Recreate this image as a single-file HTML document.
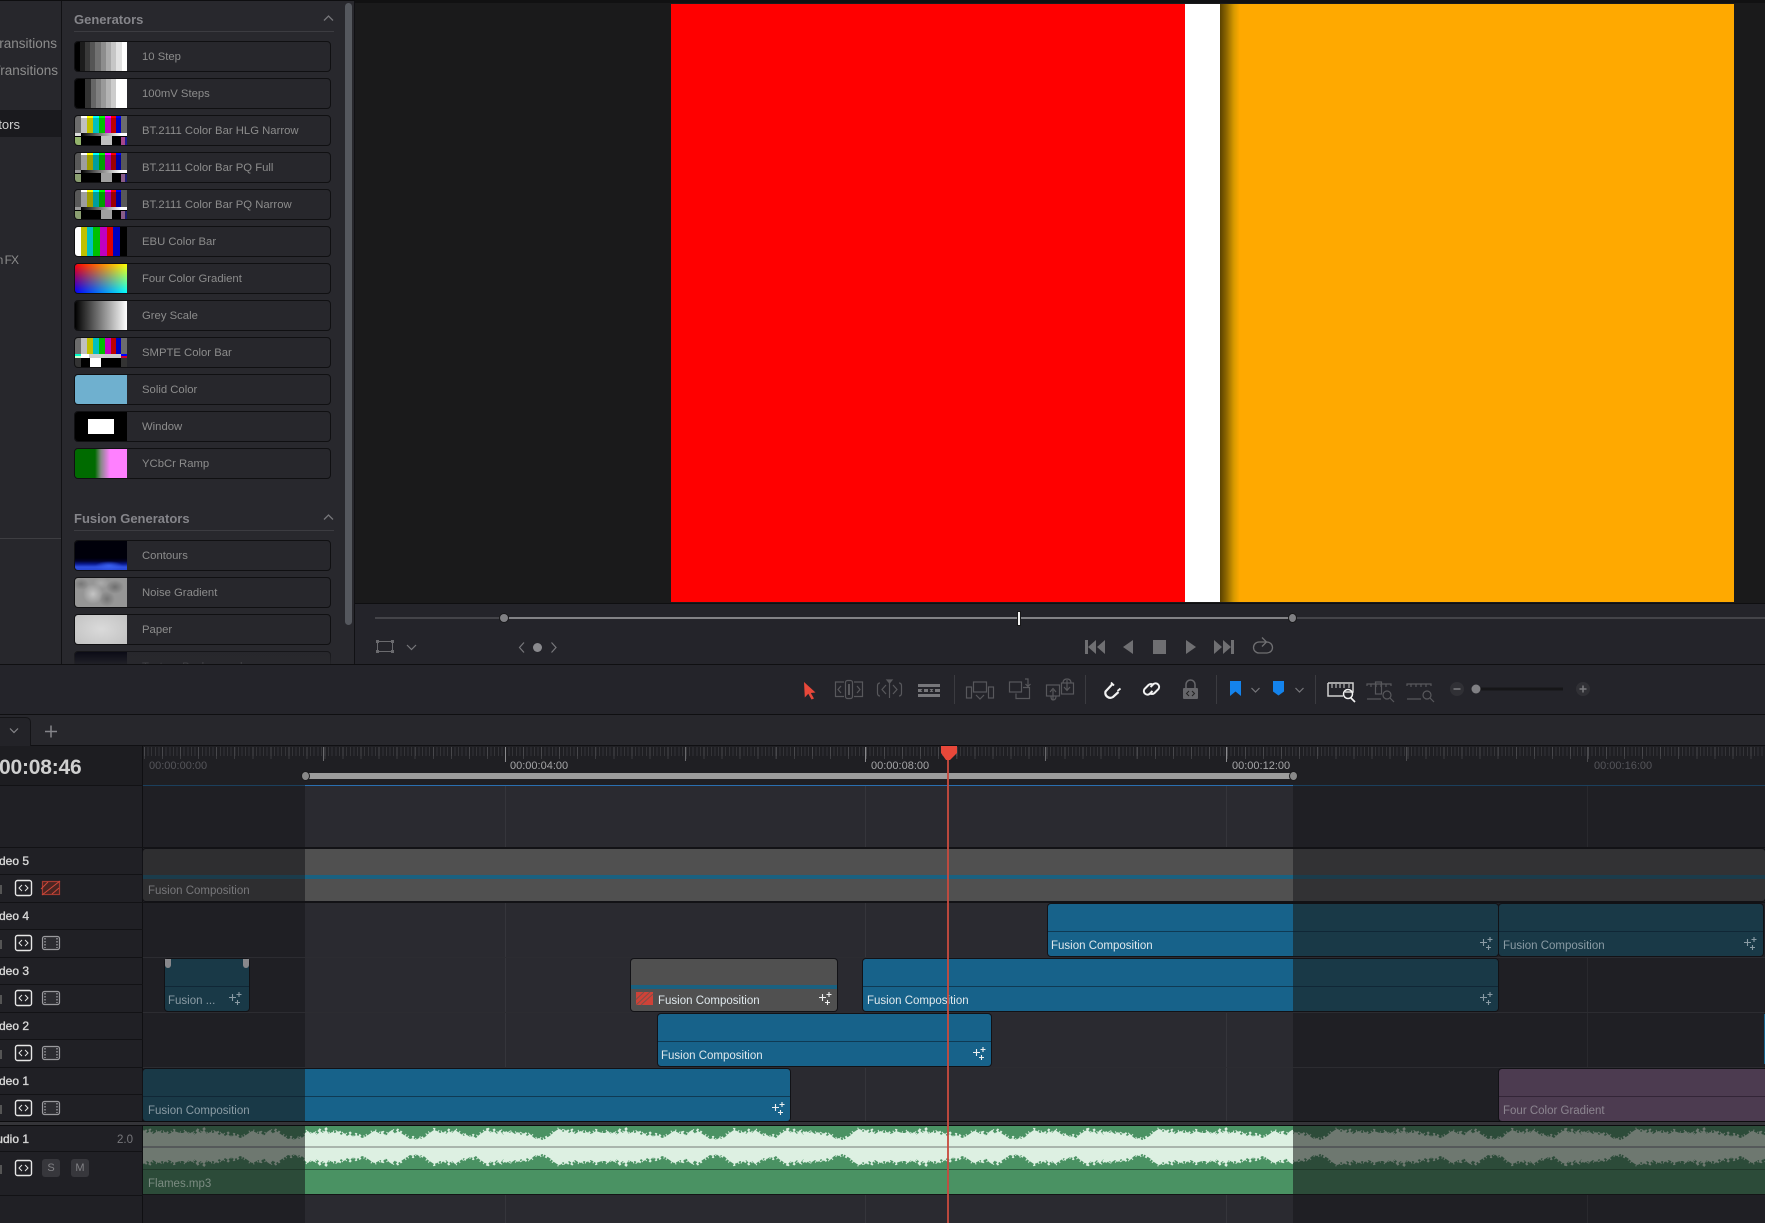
<!DOCTYPE html>
<html><head><meta charset="utf-8"><title>Edit</title>
<style>
*{box-sizing:border-box}
html,body{margin:0;padding:0;width:1765px;height:1223px;overflow:hidden;background:#25252a}
body{position:relative;font-family:"Liberation Sans",sans-serif}
.a,.t,.i,.c,.l{position:absolute}
.t{white-space:nowrap;line-height:14px;height:14px}
.i{left:74px;width:257px;height:31px;background:#27272c;border:1px solid #101012;border-radius:4px;overflow:hidden}
.i b{position:absolute;left:0;top:0;width:52px;height:29px;overflow:hidden;display:block}
.i span{position:absolute;left:67px;top:8px;font-size:11.3px;line-height:14px;color:#8c8c8c;white-space:nowrap}
.i b i{position:absolute;display:block}
.h{font-size:13px;font-weight:bold;color:#85858a}
.s{font-size:13.5px;color:#8c8c8c}
.c{border-radius:3px;box-shadow:0 0 0 1px #121216;overflow:hidden}
.c u{position:absolute;left:0;right:0;top:27px;height:1px;background:rgba(10,25,40,.55)}
.c em{position:absolute;top:35px;font-style:normal;font-size:11.5px;line-height:14px;white-space:nowrap;color:#dfe8ec}
.n{font-size:12px;-webkit-text-stroke:.35px #d8d8d8;color:#d8d8d8;text-align:right;width:80px;left:-51px}
.l{background:#121215}
.sb{background:linear-gradient(90deg,#6c6c6c 0 6px,#c0c0c0 6px 12px,#c0c000 12px 18px,#00c0c0 18px 24px,#00c000 24px 30px,#c000c0 30px 36px,#c00000 36px 41px,#0000c0 41px 46px,#6c6c6c 46px)}
</style></head><body>

<!-- far left panel -->
<div class="a" style="left:0;top:1px;width:61px;height:663px;background:#27272c"></div>
<div class="a" style="left:0;top:110px;width:61px;height:27px;background:#1a1a1e"></div>
<div class="a" style="left:0;top:538px;width:61px;height:1px;background:#3e3e42"></div>
<div class="t s" style="right:1708px;top:37px">Video Transitions</div>
<div class="t s" style="right:1707px;top:64px">Audio Transitions</div>
<div class="t" style="right:1745px;top:118px;font-size:13px;color:#cfcfcf">Generators</div>
<div class="t s" style="right:1747px;top:253px;font-size:12px;letter-spacing:-1px">Open FX</div>
<div class="a" style="left:61px;top:0;width:1px;height:664px;background:#111114"></div>

<!-- generators panel -->
<div class="a" style="left:62px;top:1px;width:292px;height:663px;background:#28282d;overflow:hidden">
</div>
<div class="a" id="gen" style="left:0;top:0;width:354px;height:664px;overflow:hidden">
<div class="t h" style="left:74px;top:13px">Generators</div>
<div class="a" style="left:74px;top:31px;width:260px;height:1px;background:#3c3c41"></div>
<svg class="a" style="left:323px;top:14px" width="11" height="8"><path d="M1 6.5L5.5 2L10 6.5" fill="none" stroke="#77777b" stroke-width="1.3"/></svg>

<div class="i" style="top:41px"><b style="background:linear-gradient(90deg,#000 0 5px,#1c1c1c 5px 10px,#393939 10px 15px,#555 15px 20px,#717171 20px 26px,#8d8d8d 26px 31px,#aaa 31px 36px,#c6c6c6 36px 41px,#e2e2e2 41px 47px,#fff 47px)"></b><span>10 Step</span></div>
<div class="i" style="top:78px"><b style="background:linear-gradient(90deg,#000 0 10px,#333 10px 16px,#666 16px 21px,#808080 21px 26px,#999 26px 31px,#b3b3b3 31px 36px,#ccc 36px 41px,#fff 41px)"></b><span>100mV Steps</span></div>
<div class="i" style="top:115px"><b style="background:#000"><i class="sb" style="left:0;top:0;width:52px;height:17px"></i><i style="left:6px;top:0;width:40px;height:2px;background:linear-gradient(90deg,#fff 0 6px,#ff0 6px 12px,#0ff 12px 18px,#0f0 18px 24px,#f0f 24px 30px,#f00 30px 35px,#00f 35px)"></i><i style="left:0;top:17px;width:6px;height:3px;background:#ddd"></i><i style="left:6px;top:17px;width:40px;height:3px;background:linear-gradient(90deg,#000,#fff)"></i><i style="left:46px;top:17px;width:6px;height:3px;background:#fff"></i><i style="left:0;top:21px;width:6px;height:8px;background:#93b36b"></i><i style="left:26px;top:20px;width:11px;height:9px;background:#c0c0c0"></i><i style="left:46px;top:21px;width:4px;height:8px;background:#a5468c"></i><i style="left:50px;top:21px;width:2px;height:8px;background:#1c1c90"></i></b><span>BT.2111 Color Bar HLG Narrow</span></div>
<div class="i" style="top:152px"><b style="background:#000"><i class="sb" style="left:0;top:0;width:52px;height:17px;opacity:.82"></i><i style="left:6px;top:0;width:40px;height:2px;background:linear-gradient(90deg,#fff 0 6px,#ff0 6px 12px,#0ff 12px 18px,#0f0 18px 24px,#f0f 24px 30px,#f00 30px 35px,#00f 35px)"></i><i style="left:0;top:17px;width:6px;height:3px;background:#999"></i><i style="left:6px;top:17px;width:40px;height:3px;background:linear-gradient(90deg,#000,#fff)"></i><i style="left:46px;top:17px;width:6px;height:3px;background:#fff"></i><i style="left:0;top:21px;width:6px;height:8px;background:#8a9e70"></i><i style="left:26px;top:20px;width:11px;height:9px;background:#a0a0a0"></i><i style="left:46px;top:21px;width:4px;height:8px;background:#8a5c88"></i><i style="left:50px;top:21px;width:2px;height:8px;background:#1c1c70"></i></b><span>BT.2111 Color Bar PQ Full</span></div>
<div class="i" style="top:189px"><b style="background:#000"><i class="sb" style="left:0;top:0;width:52px;height:17px;opacity:.82"></i><i style="left:6px;top:0;width:40px;height:2px;background:linear-gradient(90deg,#fff 0 6px,#ff0 6px 12px,#0ff 12px 18px,#0f0 18px 24px,#f0f 24px 30px,#f00 30px 35px,#00f 35px)"></i><i style="left:0;top:17px;width:6px;height:3px;background:#999"></i><i style="left:6px;top:17px;width:40px;height:3px;background:linear-gradient(90deg,#000,#fff)"></i><i style="left:46px;top:17px;width:6px;height:3px;background:#fff"></i><i style="left:0;top:21px;width:6px;height:8px;background:#8a9e70"></i><i style="left:26px;top:20px;width:11px;height:9px;background:#a0a0a0"></i><i style="left:46px;top:21px;width:4px;height:8px;background:#8a5c88"></i><i style="left:50px;top:21px;width:2px;height:8px;background:#1c1c70"></i></b><span>BT.2111 Color Bar PQ Narrow</span></div>
<div class="i" style="top:226px"><b style="background:linear-gradient(90deg,#fff 0 6px,#c0c000 6px 12px,#00c0c0 12px 18px,#00c000 18px 25px,#c000c0 25px 32px,#e00000 32px 38px,#0000c0 38px 45px,#000 45px)"></b><span>EBU Color Bar</span></div>
<div class="i" style="top:263px"><b style="background:linear-gradient(90deg,#00f,#0ff)"><i style="left:0;top:0;width:52px;height:29px;background:linear-gradient(90deg,#f00,#ff0);-webkit-mask-image:linear-gradient(180deg,#000,transparent);mask-image:linear-gradient(180deg,#000,transparent)"></i></b><span>Four Color Gradient</span></div>
<div class="i" style="top:300px"><b style="background:linear-gradient(90deg,#000,#fff)"></b><span>Grey Scale</span></div>
<div class="i" style="top:337px"><b style="background:#000"><i class="sb" style="left:0;top:0;width:52px;height:16px"></i><i style="left:0;top:16px;width:6px;height:4px;background:linear-gradient(180deg,#0fc 0 2px,#cfc 2px)"></i><i style="left:6px;top:16px;width:40px;height:4px;background:linear-gradient(90deg,#fff 0 8px,#ccc 8px)"></i><i style="left:46px;top:16px;width:6px;height:4px;background:linear-gradient(180deg,#00f 0 2px,#c03 2px)"></i><i style="left:0;top:20px;width:6px;height:9px;background:#333"></i><i style="left:15px;top:20px;width:11px;height:9px;background:#fff"></i><i style="left:46px;top:20px;width:6px;height:9px;background:#333"></i></b><span>SMPTE Color Bar</span></div>
<div class="i" style="top:374px"><b style="background:#6fb0cf"></b><span>Solid Color</span></div>
<div class="i" style="top:411px"><b style="background:#000"><i style="left:13px;top:7px;width:26px;height:15px;background:#fff"></i></b><span>Window</span></div>
<div class="i" style="top:448px"><b style="background:linear-gradient(90deg,#006b00 0 20px,#888 26px,#ff80ff 35px)"></b><span>YCbCr Ramp</span></div>

<div class="t h" style="left:74px;top:512px">Fusion Generators</div>
<div class="a" style="left:74px;top:530px;width:260px;height:1px;background:#3c3c41"></div>
<svg class="a" style="left:323px;top:513px" width="11" height="8"><path d="M1 6.5L5.5 2L10 6.5" fill="none" stroke="#77777b" stroke-width="1.3"/></svg>

<div class="i" style="top:540px"><b style="background:radial-gradient(ellipse 14px 5px at 34px 25px,#3a60f0,transparent),linear-gradient(180deg,#00000a 0 17px,#02022a 20px,#0a1a90 23px,#2f50e0 26px,#2a48d8 29px)"></b><span>Contours</span></div>
<div class="i" style="top:577px"><b style="background:radial-gradient(ellipse 10px 10px at 18px 16px,#c4c4c4,transparent),radial-gradient(ellipse 9px 7px at 40px 9px,#707070,transparent),radial-gradient(ellipse 8px 8px at 32px 21px,#767676,transparent),radial-gradient(ellipse 8px 6px at 6px 6px,#787878,transparent),radial-gradient(ellipse 8px 6px at 26px 5px,#aaa,transparent),#969696"></b><span>Noise Gradient</span></div>
<div class="i" style="top:614px"><b style="background:radial-gradient(ellipse 32px 20px at 26px 14px,#dadada,#c4c4c4)"></b><span>Paper</span></div>
<div class="i" style="top:651px"><b style="background:#01010e"></b><span>Texture Background</span></div>
<div class="a" style="left:62px;top:646px;width:282px;height:18px;background:linear-gradient(180deg,rgba(40,40,45,0),rgba(40,40,45,.8))"></div>
</div>
<div class="a" style="left:345px;top:3px;width:7px;height:622px;border-radius:4px;background:#55585e"></div>
<div class="a" style="left:354px;top:0;width:1px;height:664px;background:#111114"></div>

<!-- viewer -->
<div class="a" style="left:355px;top:0;width:1410px;height:604px;background:#1a1a1b"></div>
<div class="a" style="left:0;top:0;width:1765px;height:1px;background:#0e0e10"></div>
<div class="a" style="left:355px;top:0;width:1410px;height:3px;background:#111112"></div>
<div class="a" style="left:671px;top:4px;width:514px;height:598px;background:#f00"></div>
<div class="a" style="left:1185px;top:4px;width:35px;height:598px;background:#fff"></div>
<div class="a" style="left:1220px;top:4px;width:514px;height:598px;background:linear-gradient(90deg,#5a4200 0,#8a6400 6px,#d89a00 14px,#ffa900 20px)"></div>
<div class="a" style="left:355px;top:603px;width:1410px;height:1px;background:#0f0f11"></div>

<!-- jog -->
<div class="a" style="left:355px;top:604px;width:1410px;height:60px;background:#24242a"></div>
<div class="a" style="left:375px;top:617px;width:1390px;height:2px;background:#444449"></div>
<div class="a" style="left:504px;top:617px;width:788px;height:2px;background:#828286"></div>
<div class="a" style="left:500px;top:614px;width:8px;height:8px;border-radius:50%;background:#808084;box-shadow:0 0 0 1px #18181a"></div>
<div class="a" style="left:1288.5px;top:614px;width:7px;height:8px;border-radius:50%;background:#808084;box-shadow:0 0 0 1px #18181a"></div>
<div class="a" style="left:1018px;top:612px;width:2px;height:13px;background:#f0f0f0;box-shadow:0 0 0 1px #18181a"></div>

<!-- toolbar, tabs -->
<div class="a" style="left:0;top:664px;width:1765px;height:51px;background:#24242a;border-top:1px solid #0f0f11;border-bottom:1px solid #0f0f11"></div>
<div class="a" style="left:0;top:715px;width:1765px;height:31px;background:#27272c;border-bottom:1px solid #101013"></div>
<div class="a" style="left:-4px;top:717px;width:35px;height:29px;background:#232328;border:1px solid #141417;border-radius:0 5px 0 0;border-bottom:0"></div>

<!-- timeline columns -->
<div class="a" style="left:143px;top:746px;width:1622px;height:477px;background:linear-gradient(90deg,#1f1f24 0 162px,#2a2a30 162px 1150px,#1f1f24 1150px)"></div>
<div class="a" style="left:143px;top:746px;width:1622px;height:39px;background:#1f1f23"></div>
<div class="a" style="left:144px;top:747px;width:1621px;height:9px;opacity:.38;background:repeating-linear-gradient(90deg,#55555a 0 1px,transparent 1px 3.61px)"></div>
<div class="a" style="left:144px;top:747px;width:1621px;height:12px;opacity:.38;background:repeating-linear-gradient(90deg,#6a6a6e 0 1px,transparent 1px 18.05px)"></div>
<div class="a" style="left:323px;top:747px;width:1px;height:14px;background:#6a6a6d"></div>
<div class="a" style="left:505px;top:747px;width:1px;height:15px;background:#8a8a8d"></div>
<div class="a" style="left:685px;top:747px;width:1px;height:14px;background:#6a6a6d"></div>
<div class="a" style="left:865px;top:747px;width:1px;height:15px;background:#8a8a8d"></div>
<div class="a" style="left:1045px;top:747px;width:1px;height:14px;background:#6a6a6d"></div>
<div class="a" style="left:1226px;top:747px;width:1px;height:15px;background:#8a8a8d"></div>
<div class="a" style="left:1406px;top:747px;width:1px;height:14px;background:#4a4a4d"></div>
<div class="a" style="left:1587px;top:747px;width:1px;height:15px;background:#4a4a4d"></div>
<div class="t" style="left:149px;top:759px;font-size:11px;color:#55555a">00:00:00:00</div>
<div class="t" style="left:510px;top:759px;font-size:11px;color:#a6a6a8">00:00:04:00</div>
<div class="t" style="left:871px;top:759px;font-size:11px;color:#a6a6a8">00:00:08:00</div>
<div class="t" style="left:1232px;top:759px;font-size:11px;color:#a6a6a8">00:00:12:00</div>
<div class="t" style="left:1594px;top:759px;font-size:11px;color:#55555a">00:00:16:00</div>
<div class="a" style="left:305px;top:773px;width:988px;height:6px;background:#9c9c9c"></div>
<div class="a" style="left:302px;top:772px;width:7px;height:8px;border-radius:50%;background:#888;box-shadow:0 0 0 1px #1a1a1c"></div>
<div class="a" style="left:1290px;top:772px;width:7px;height:8px;border-radius:50%;background:#888;box-shadow:0 0 0 1px #1a1a1c"></div>
<div class="a" style="left:143px;top:785px;width:1622px;height:1px;background:#1b3f5c"></div>
<div class="a" style="left:305px;top:785px;width:988px;height:1px;background:#2a6fb0"></div>

<!-- grid lines -->
<div class="a" style="left:505px;top:786px;width:1px;height:437px;background:#35353b"></div>
<div class="a" style="left:865px;top:786px;width:1px;height:437px;background:#35353b"></div>
<div class="a" style="left:1226px;top:786px;width:1px;height:437px;background:#35353b"></div>
<div class="a" style="left:1587px;top:786px;width:1px;height:437px;background:#29292e"></div>
<div class="a" style="left:143px;top:847px;width:1622px;height:1px;background:#121215"></div>
<div class="a" style="left:143px;top:902px;width:1622px;height:1px;background:#121215"></div>
<div class="a" style="left:143px;top:957px;width:1622px;height:1px;background:#2c2c31"></div>
<div class="a" style="left:143px;top:1012px;width:1622px;height:1px;background:#2c2c31"></div>
<div class="a" style="left:143px;top:1067px;width:1622px;height:1px;background:#2c2c31"></div>

<!-- header col -->
<div class="a" style="left:0;top:746px;width:143px;height:477px;background:#202025"></div>
<div class="a" style="left:0;top:746px;width:143px;height:39px;background:#1d1d21"></div>
<div class="a" style="left:142px;top:746px;width:1px;height:477px;background:#0f0f12"></div>
<div class="t" style="left:-1px;top:756px;height:23px;line-height:23px;font-size:21px;font-weight:bold;color:#cfcfcf;letter-spacing:-.2px">00:08:46</div>
<div class="l" style="left:0;top:785px;width:143px;height:1px"></div>
<div class="l" style="left:0;top:847px;width:143px;height:1px"></div>
<div class="l" style="left:0;top:874px;width:143px;height:1px"></div>
<div class="l" style="left:0;top:902px;width:143px;height:1px"></div>
<div class="l" style="left:0;top:929px;width:143px;height:1px"></div>
<div class="l" style="left:0;top:957px;width:143px;height:1px"></div>
<div class="l" style="left:0;top:984px;width:143px;height:1px"></div>
<div class="l" style="left:0;top:1012px;width:143px;height:1px"></div>
<div class="l" style="left:0;top:1039px;width:143px;height:1px"></div>
<div class="l" style="left:0;top:1067px;width:143px;height:1px"></div>
<div class="l" style="left:0;top:1094px;width:143px;height:1px"></div>
<div class="l" style="left:0;top:1151px;width:143px;height:1px"></div>
<div class="l" style="left:0;top:1195px;width:143px;height:1px"></div>
<div class="t n" style="top:854px">Video 5</div>
<div class="t n" style="top:909px">Video 4</div>
<div class="t n" style="top:964px">Video 3</div>
<div class="t n" style="top:1019px">Video 2</div>
<div class="t n" style="top:1074px">Video 1</div>
<div class="t n" style="top:1132px">Audio 1</div>
<div class="t" style="right:1632px;top:1133px;font-size:11.5px;color:#77777b">2.0</div>
<div class="a" style="left:42px;top:1159px;width:18px;height:18px;background:#37373c;border-radius:3px"></div>
<div class="a" style="left:71px;top:1159px;width:18px;height:18px;background:#37373c;border-radius:3px"></div>
<div class="t" style="left:42px;top:1161px;width:18px;text-align:center;font-size:11px;color:#818185">S</div>
<div class="t" style="left:71px;top:1161px;width:18px;text-align:center;font-size:11px;color:#818185">M</div>

<!-- Clips -->
<div class="c" style="left:143px;top:849px;width:1622px;height:52px;background:linear-gradient(90deg,#2e2e30 0 162px,#505050 162px 1150px,#323234 1150px)"><div class="a" style="left:0;right:0;top:26px;height:4px;background:linear-gradient(90deg,#1b3c4b 0 162px,#1a6180 162px 1150px,#1b3c4b 1150px)"></div><em style="left:5px;color:#77777a">Fusion Composition</em></div>

<div class="c" style="left:1048px;top:904px;width:450px;height:52px;background:linear-gradient(90deg,#17628a 0 245px,#193947 245px)"><u></u><em style="left:3px">Fusion Composition</em></div>
<div class="c" style="left:1499px;top:904px;width:264px;height:52px;background:#193947"><u></u><em style="left:4px;color:#8a9ba4">Fusion Composition</em></div>

<div class="c" style="left:165px;top:959px;width:84px;height:52px;background:#193947"><u></u><em style="left:3px;color:#8a9ba4">Fusion ...</em></div>
<div class="a" style="left:165px;top:959px;width:6px;height:9px;border-radius:0 0 3px 3px;background:#88888c"></div>
<div class="a" style="left:243px;top:959px;width:6px;height:9px;border-radius:0 0 3px 3px;background:#88888c"></div>
<div class="c" style="left:631px;top:959px;width:206px;height:52px;background:#505050"><div class="a" style="left:0;right:0;top:26px;height:4px;background:#1a6180"></div><em style="left:27px">Fusion Composition</em></div>
<div class="c" style="left:863px;top:959px;width:635px;height:52px;background:linear-gradient(90deg,#17628a 0 430px,#193947 430px)"><u></u><em style="left:4px">Fusion Composition</em></div>

<div class="c" style="left:658px;top:1014px;width:333px;height:52px;background:#17628a"><u></u><em style="left:3px">Fusion Composition</em></div>
<div class="a" style="left:1764px;top:1014px;width:1px;height:50px;background:#17628a"></div>

<div class="c" style="left:143px;top:1069px;width:647px;height:52px;background:linear-gradient(90deg,#193947 0 162px,#17628a 162px)"><u></u><em style="left:5px;color:#8a9ba4">Fusion Composition</em></div>
<div class="c" style="left:1499px;top:1069px;width:270px;height:52px;background:#4c3b50"><u style="background:rgba(25,15,30,.5)"></u><em style="left:4px;color:#8c8590">Four Color Gradient</em></div>

<!-- audio -->
<div class="a" style="left:143px;top:1121px;width:1622px;height:5px;background:#343438;border-top:1px solid #0c0c0e;border-bottom:1px solid #0c0c0e"></div>
<div class="a" style="left:0;top:1121px;width:143px;height:5px;background:#343438;border-top:1px solid #0c0c0e;border-bottom:1px solid #0c0c0e"></div>
<div class="a" style="left:143px;top:1126px;width:1622px;height:69px;background:linear-gradient(90deg,#2c4b39 0 162px,#4a9263 162px 1150px,#2c4b39 1150px);border-bottom:1px solid #141416"></div>
<svg class="a" style="left:143px;top:1126px" width="1622" height="44">
<defs>
<path id="w" d="M0 21V7L3 5L6 8L9 6L12 9L15 5L18 7L21 4L24 8L27 6L30 7L33 5L36 9L39 7L42 10L45 8L48 11L51 9L54 10L57 12L60 11L63 9L66 7L69 5L72 6L75 8L78 7L81 10L84 6L87 4L90 8L93 5L96 7L99 9L102 11L105 13L108 12L111 14L114 12L117 13L120 11L123 8L126 6L129 4L132 5L135 7L138 6L141 8L144 5L147 7L150 4L153 6L156 8L159 10L162 9L165 11L168 10L171 12L174 9L177 7L180 5L183 4L186 7L189 5L192 8L195 4L198 9L201 5L204 7L207 6L210 8L213 6L216 9L219 7L222 10L225 8L228 11L231 13L234 12L237 14L240 13L243 11L246 9L249 6L252 4L255 3L258 6L261 4L264 7L267 5L270 8L273 6L276 5L279 7L282 6L285 8L288 7L291 5L294 6L297 7L300 7V21Z"/>
<pattern id="p1" width="300" height="44" patternUnits="userSpaceOnUse" x="162"><g fill="#ddf0e2" stroke="#ddf0e2" stroke-width="4" stroke-dasharray="1 3 1 2 2 4 1 2 1 5 1 3"><use href="#w"/><use href="#w" transform="matrix(1 0 0 -1 0 42)"/></g></pattern>
<pattern id="p2" width="300" height="44" patternUnits="userSpaceOnUse" x="40"><g fill="#6e7870" stroke="#6e7870" stroke-width="4" stroke-dasharray="1 3 1 2 2 4 1 2 1 5 1 3"><use href="#w"/><use href="#w" transform="matrix(1 0 0 -1 0 42)"/></g></pattern>
</defs>
<rect x="0" width="162" height="43" fill="url(#p2)"/>
<rect x="162" width="988" height="43" fill="url(#p1)"/>
<rect x="1150" width="472" height="43" fill="url(#p2)"/>
<rect x="0" y="20" width="162" height="2" fill="#55595a"/>
<rect x="162" y="20" width="988" height="2" fill="#a9b5ac"/>
<rect x="1150" y="20" width="472" height="2" fill="#55595a"/>
<rect x="0" y="43" width="162" height="1" fill="#20382a"/>
<rect x="162" y="43" width="988" height="1" fill="#2c5a3e"/>
<rect x="1150" y="43" width="472" height="1" fill="#20382a"/>
</svg>
<div class="t" style="left:148px;top:1177px;font-size:11.5px;color:#7c8c82">Flames.mp3</div>

<!-- playhead -->
<div class="a" style="left:947px;top:760px;width:2px;height:463px;background:#c74b3f;opacity:.92"></div>

<!-- All icons -->
<svg class="a" style="left:0;top:0" width="1765" height="1223" fill="none">
<defs>
<g id="sp" fill="none" stroke="currentColor" stroke-width="1.100"><path d="M0 5.500H7M3.500 2V9M7.500 2.500H12.500M10 0V5M6 10.500H11M8.500 8V13"/></g>
<g id="ctl"><rect x="15.500" y="-7.500" width="16" height="15" rx="2" stroke="#e6e6e6" stroke-width="1.400"/><path d="M22 -3L19 0L22 3M25 -3L28 0L25 3" stroke="#e6e6e6" stroke-width="1"/><path d="M0 -3H2V6H0Z" fill="#555"/></g>
<g id="film"><rect x="42.500" y="-6.500" width="17" height="13" rx="2" stroke="#9a9a9e" stroke-width="1.200" fill="#2c2c31"/><path d="M45 -5V5M57 -5V5" stroke="#9a9a9e" stroke-width="1.400" stroke-dasharray="1.500 1.500"/></g>
<g id="red"><rect x="0.500" y="-6.500" width="17" height="13" fill="#4a2522" stroke="#a53a30" stroke-width="1.200"/><path d="M0 7L18 -7M-1 1L6 -6M10 6L17 0" stroke="#d0483a" stroke-width="1"/></g>
<g id="red2"><rect x="0" y="-6.500" width="17" height="13" fill="#cf4238"/><path d="M0 6.500L14 -6.500M5 6.500L17 -4.500M0 1L8 -6.500" stroke="#7c5048" stroke-width="1"/></g>
</defs>

<!-- frame & keyframes -->
<rect x="377.500" y="641.500" width="15" height="10" stroke="#6a6a6e"/>
<path d="M376 640h3v3h-3zM391 640h3v3h-3zM376 650h3v3h-3zM391 650h3v3h-3z" fill="#6a6a6e"/>
<path d="M407 645L411.500 649.500L416 645" stroke="#77777b" stroke-width="1.200"/>
<path d="M524 642.500L519.500 647.500L524 652.500M551.500 642.500L556 647.500L551.500 652.500" stroke="#77777b" stroke-width="1.200"/>
<circle cx="537.500" cy="647.500" r="4.500" fill="#8a8a8e"/>

<!-- transport -->
<g fill="#6f6f72">
<path d="M1085 640h3v14h-3zM1096 640v14l-8-7zM1105 640v14l-8-7z"/>
<path d="M1133 640v14l-10-7z"/>
<rect x="1153" y="640" width="13" height="14"/>
<path d="M1186 640v14l10-7z"/>
<path d="M1214 640v14l8-7zM1223 640v14l8-7zM1231 640h3v14h-3z"/>
</g>
<path d="M1259 642H1267A5.500 5.500 0 0 1 1267 653H1259A5.500 5.500 0 0 1 1259 642" stroke="#6f6f72" stroke-width="1.300"/>
<path d="M1262 637.500L1266.500 642L1262 646.500" stroke="#6f6f72" stroke-width="1.300"/>

<!-- separators -->
<path d="M954.500 675V704M1085.500 675V704M1216.500 675V704M1315.500 675V704" stroke="#3b3b40"/>

<!-- pointer -->
<path d="M804 682L815.500 692.500L810.800 693L814 698.500L811.500 699.500L808.300 693.800L804.800 697.500Z" fill="#e8483a"/>

<g stroke="#58585c" stroke-width="1.200">
<!-- trim -->
<path d="M844 682H835.500V696.500H844M854 682H862.500V696.500H854"/>
<rect x="845.500" y="680.500" width="7" height="18" rx="2"/>
<path d="M849 684V695" stroke-width="2"/>
<path d="M841 686L838 689.500L841 693M857 686L860 689.500L857 693"/>
<!-- dynamic trim -->
<path d="M880 683Q877.500 683 877.500 686V693Q877.500 696 880 696M899 683Q901.500 683 901.500 686V693Q901.500 696 899 696"/>
<path d="M889.500 681V698" />
<path d="M887 680H892L889.500 683Z" fill="#58585c"/>
<path d="M886 685L882 689.500L886 694M893 685L897 689.500L893 694"/>
<!-- insert -->
<rect x="973.500" y="682" width="13" height="10" />
<rect x="966.500" y="687" width="5" height="11" />
<rect x="988.500" y="687" width="5" height="11" />
<path d="M976 695L980 699L984 695"/>
<!-- overwrite -->
<rect x="1009.500" y="682" width="12" height="10"/>
<path d="M1023 687.500H1029.500V698.500H1016V693.500" fill="none"/>
<path d="M1025 679H1028V686M1025.500 684L1028 686.500L1030.500 684"/>
<!-- replace -->
<rect x="1046.500" y="685" width="13" height="11"/>
<rect x="1061.500" y="683" width="12" height="11"/>
<path d="M1053 700V690M1050 692L1053 688.500L1056 692M1067 680V690M1064 687L1067 690.500L1070 687"/>
<path d="M1051 696Q1051 700 1053 700Q1056 700 1056 696M1063 683Q1063 679 1067 679Q1071 679 1071 683"/>
<!-- zoom -->
<path d="M1367 686V684H1391V686M1371 684V687M1376 684V687M1381 684V687M1386 684V687M1367 699H1381"/>
<rect x="1375.500" y="682" width="6" height="12"/>
<circle cx="1387" cy="695" r="4"/>
<path d="M1390 698L1394 702"/>
<path d="M1407 686V684H1431V686M1411 684V687M1416 684V687M1421 684V687M1426 684V687M1407 699H1421"/>
<circle cx="1427" cy="695" r="4"/>
<path d="M1430 698L1434 702"/>
</g>
<!-- blade -->
<path d="M918 684H940V687H918ZM918 694H940V697H918Z" fill="#77777b"/>
<path d="M918 689H940V692H918Z" fill="#77777b"/>
<path d="M924 687.500L921 690.500L924 693.500ZM928 687.500L931 690.500L928 693.500M935 687.500L932 690.500L935 693.500" fill="#25252a"/>

<!-- magnet -->
<path d="M1112.500 684L1105.500 691.500A5 5 0 0 0 1113 697L1118.500 692" stroke="#f2f2f2" stroke-width="2.200"/>
<path d="M1111 682.500L1114 685.500M1117.500 691L1120.500 688.500" stroke="#f2f2f2" stroke-width="1.800"/>
<!-- link -->
<path d="M1150.500 687L1153.500 684A3.600 3.600 0 0 1 1158.500 689L1154.500 693A3.600 3.600 0 0 1 1149.500 693" stroke="#f2f2f2" stroke-width="2"/>
<path d="M1152.500 691L1149.500 694A3.600 3.600 0 0 1 1144.500 689L1148.500 685A3.600 3.600 0 0 1 1153.500 685" stroke="#f2f2f2" stroke-width="2"/>
<!-- lock -->
<rect x="1183" y="688" width="15" height="11" rx="1" fill="#66666a"/>
<path d="M1186 688V684.500A4.500 4.500 0 0 1 1195 684.500V688" stroke="#66666a" stroke-width="1.500"/>
<path d="M1189 691L1186.500 693.500L1189 696M1192 691L1194.500 693.500L1192 696" stroke="#222" stroke-width="1"/>

<!-- flag/marker -->
<path d="M1230 681H1241V696L1235.500 691.500L1230 696Z" fill="#1483ec"/>
<path d="M1251.500 688L1255.500 692L1259.500 688" stroke="#77777b" stroke-width="1.200"/>
<path d="M1273 681H1284V691.500L1278.500 695.500L1273 691.500Z" fill="#1483ec"/>
<path d="M1295.500 688L1299.500 692L1303.500 688" stroke="#77777b" stroke-width="1.200"/>

<!-- ruler zoom full -->
<path d="M1328 683H1353V692H1345M1328 683V696H1343" stroke="#d0d0d0" stroke-width="1.500"/>
<path d="M1332 684V688M1336 684V688M1340 684V688M1344 684V688M1349 684V688" stroke="#d0d0d0"/>
<circle cx="1348" cy="694" r="4.500" stroke="#f2f2f2" stroke-width="1.500"/>
<path d="M1351 698L1355 702" stroke="#f2f2f2" stroke-width="1.700"/>

<!-- zoom slider -->
<circle cx="1457" cy="689" r="7" fill="#303035"/>
<path d="M1453.500 689H1460.500" stroke="#7a7a7e" stroke-width="1.500"/>
<path d="M1476 689H1563" stroke="#161618" stroke-width="3"/>
<circle cx="1476" cy="689" r="4.500" fill="#808084"/>
<circle cx="1583" cy="689" r="7" fill="#303035"/>
<path d="M1579.500 689H1586.500M1583 685.500V692.500" stroke="#7a7a7e" stroke-width="1.500"/>

<!-- tabs -->
<path d="M10 728.500L14 732.500L18 728.500" stroke="#86868a" stroke-width="1.200"/>
<path d="M45 731.500H57M51 725.500V737.500" stroke="#85858a" stroke-width="1.500"/>

<!-- track controls -->
<use href="#ctl" y="888"/><use href="#red" x="42" y="888"/>
<use href="#ctl" y="943"/><use href="#film" y="943"/>
<use href="#ctl" y="998"/><use href="#film" y="998"/>
<use href="#ctl" y="1053"/><use href="#film" y="1053"/>
<use href="#ctl" y="1108"/><use href="#film" y="1108"/>
<use href="#ctl" y="1168"/>

<!-- clip sparkles -->
<use href="#sp" x="229" y="992" style="color:#8a9ba4"/>
<use href="#sp" x="819" y="992" style="color:#f0f0f0"/>
<use href="#sp" x="973" y="1047" style="color:#f0f0f0"/>
<use href="#sp" x="772" y="1102" style="color:#f0f0f0"/>
<use href="#sp" x="1480" y="937" style="color:#8a9ba4"/>
<use href="#sp" x="1480" y="992" style="color:#8a9ba4"/>
<use href="#sp" x="1744" y="937" style="color:#8a9ba4"/>
<use href="#red2" x="636" y="998.500"/>

<!-- playhead -->
<path d="M941 746H957V753L950 760H946L941 753Z" fill="#e8483a"/>
</svg>
</body></html>
